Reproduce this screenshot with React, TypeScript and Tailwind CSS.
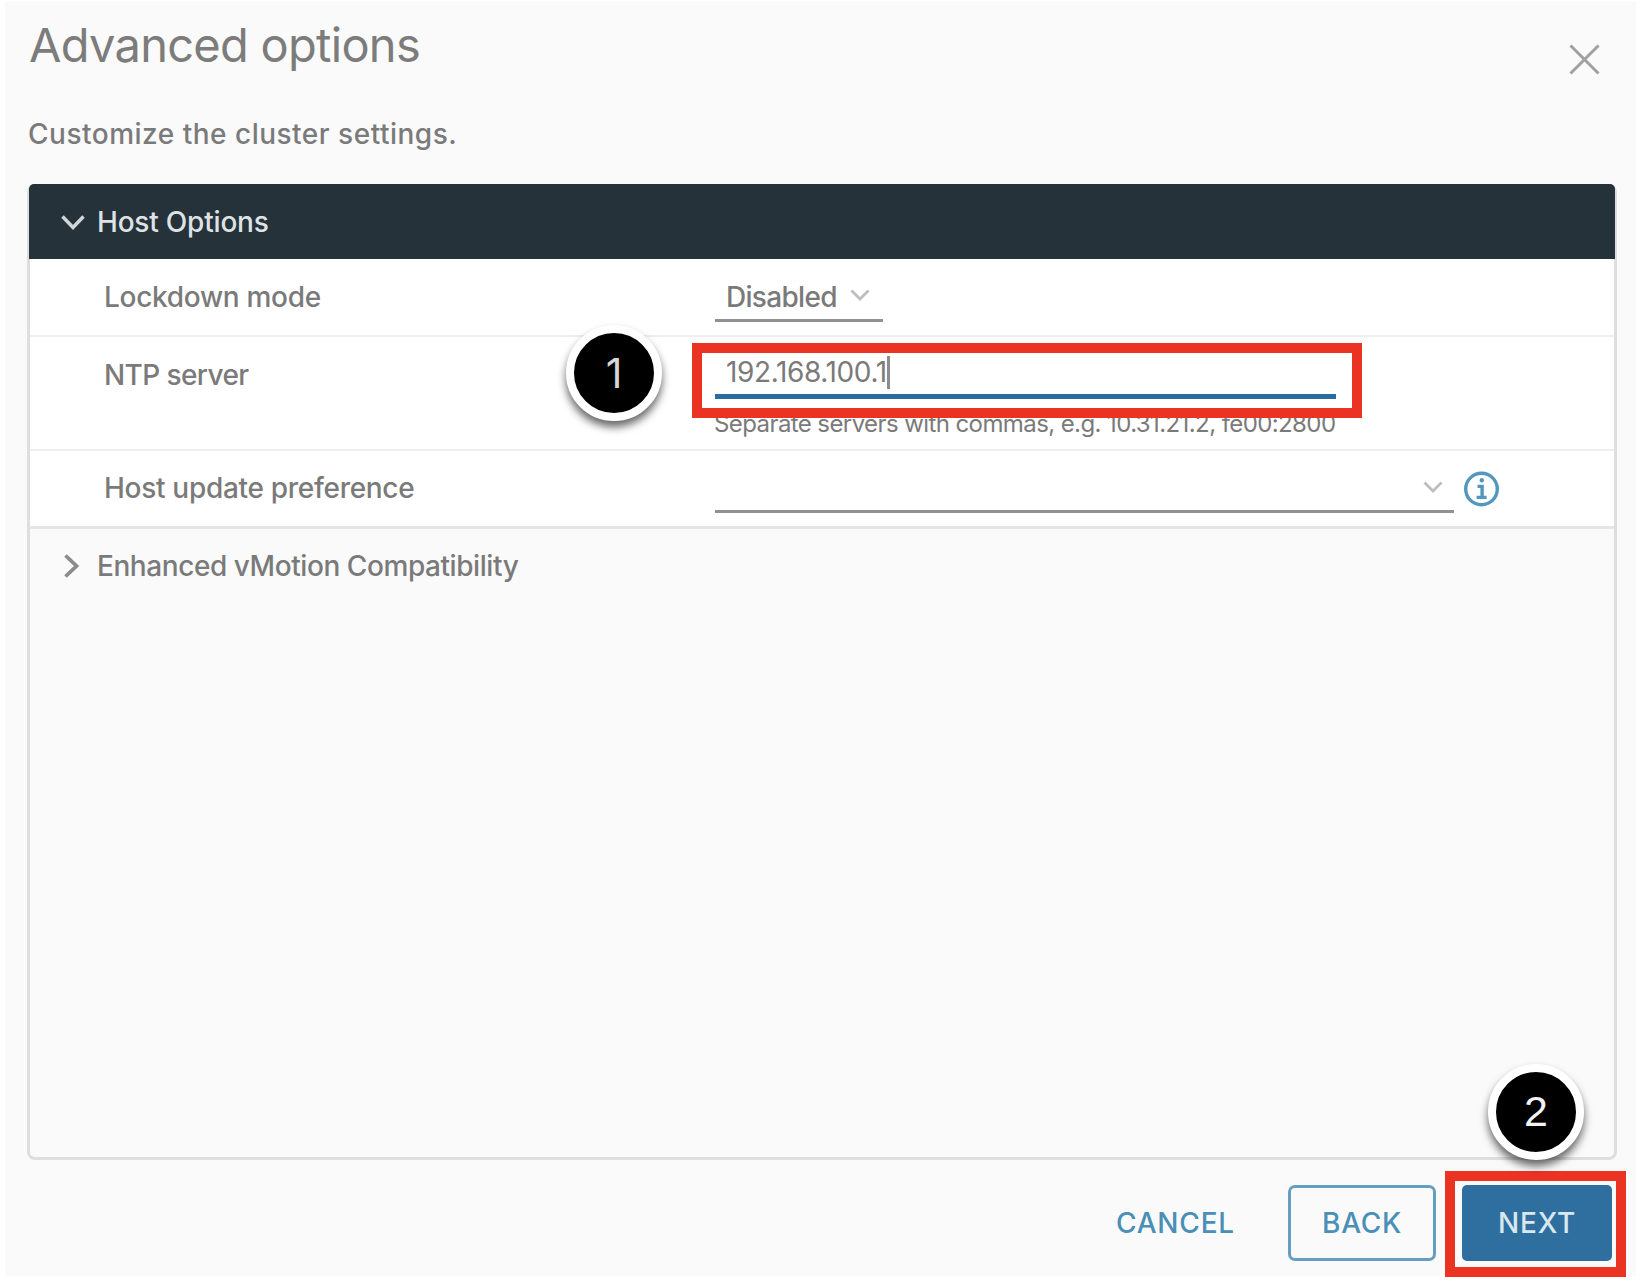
import type { ReactNode } from "react";

function Chevron({ className, points, box, stroke }: { className: string; points: string; box: string; stroke: number }) {
  return (
    <svg className={className} viewBox={box} fill="none" stroke="currentColor" strokeWidth={stroke}>
      <polyline points={points} />
    </svg>
  );
}

function SmallChevron() {
  return <Chevron className="h-3 w-5 text-[#bdbdbd]" box="0 0 20 12" points="1.5,1.5 10,10 18.5,1.5" stroke={2.8} />;
}

function InfoIcon() {
  return (
    <svg className="h-9 w-9 text-[#5297bd]" viewBox="0 0 36 36" fill="none" stroke="currentColor" strokeWidth={3.4}>
      <circle cx="17.5" cy="18" r="15.8" />
      <circle cx="17.8" cy="9.3" r="2.2" fill="currentColor" stroke="none" />
      <path d="M13.5 15.4h4.6v10.4M12.6 26.4h10" strokeWidth={3.4} />
    </svg>
  );
}

function Badge({ children, className }: { children: ReactNode; className: string }) {
  return (
    <div
      className={`absolute flex h-24 w-24 items-center justify-center rounded-full border-8 border-white bg-black shadow-[0_6px_9px_rgba(0,0,0,0.6)] ${className}`}
    >
      {children}
    </div>
  );
}

function Row({ label, className, labelClass, children }: { label: string; className: string; labelClass: string; children: ReactNode }) {
  return (
    <div className={`flex bg-white ${className}`}>
      <div className={`w-[612px] shrink-0 pl-[74px] leading-9 ${labelClass}`}>{label}</div>
      {children}
    </div>
  );
}

export default function App() {
  return (
    <div className="h-[1282px] w-[1642px] overflow-hidden bg-white pt-px pl-[5px] font-['Inter',sans-serif] text-[28px] font-medium text-[#7a7a7a]">
      <div className="relative flex h-[1275px] w-[1631px] flex-col bg-[#fafafa]">
        <header className="flex h-[109px] items-start justify-between pr-[36px] pl-[24px]">
          <h1 className="pt-[14px] text-[47px] leading-[60px] font-normal tracking-[-0.72px] text-[#7c7c7c]">Advanced options</h1>
          <button type="button" aria-label="Close" className="mt-[43px]">
            <svg className="h-[31px] w-[31px] text-[#a0a0a0]" viewBox="0 0 31 31" stroke="currentColor" strokeWidth={3}>
              <path d="M1.5 1.5l28 28M29.5 1.5l-28 28" />
            </svg>
          </button>
        </header>
        <p className="h-[74px] pt-[6px] pl-[23px] leading-9 tracking-[0.5px]">Customize the cluster settings.</p>

        <section className="ml-[22px] h-[976px] w-[1590px] rounded-lg border-x-[3px] border-b-[3px] border-[#dedede]">
          <div className="-mx-px flex h-[75px] items-center rounded-t-[5px] bg-[#25323a] pl-[32px] text-[#dfe2e4]">
            <Chevron className="h-4 w-6 text-[#d2d5d7]" box="0 0 24 16" points="1.5,2.5 12,13.5 22.5,2.5" stroke={3.5} />
            <span className="pt-px pl-[12px] tracking-[-0.2px]">Host Options</span>
          </div>

          <Row label="Lockdown mode" labelClass="pt-[20px] tracking-[-0.3px]" className="h-[78px] border-b-2 border-[#eeeeee]">
            <div className="mt-[17px] ml-[73px] flex h-[46px] w-[168px] items-start border-b-[3px] border-[#919191] pl-[11px]">
              <span className="pt-[3px] leading-9 tracking-[-0.7px]">Disabled</span>
              <span className="ml-[13px] pt-[13px]">
                <SmallChevron />
              </span>
            </div>
          </Row>

          <Row label="NTP server" labelClass="pt-[20px] tracking-[-0.6px]" className="h-[114px] border-b-2 border-[#eeeeee]">
            <div className="ml-[73px] flex w-[621px] flex-col">
              <div className="flex h-[62px] items-start border-b-[5px] border-[#2b6c9f] pt-[17px] pl-[11px] font-normal">
                <span className="leading-9 tracking-[-0.38px]">192.168.100.1</span>
                <span className="mt-[2px] h-[33px] w-[3px] bg-[#8c8c8c]" />
              </div>
              <span className="mt-[7px] -ml-px text-[24px] leading-9 font-normal tracking-[-0.59px] whitespace-nowrap">
                Separate servers with commas, e.g. 10.31.21.2, fe00:2800
              </span>
            </div>
          </Row>

          <Row label="Host update preference" labelClass="pt-[19px] tracking-[-0.3px]" className="h-[78px] border-b-[3px] border-[#e5e5e5]">
            <div className="ml-[73px] flex h-[62px] w-[739px] items-start justify-end border-b-[3px] border-[#919191] pt-[30px] pr-[11px]">
              <SmallChevron />
            </div>
            <span className="mt-[20px] ml-[10px]">
              <InfoIcon />
            </span>
          </Row>

          <div className="flex h-[74px] items-center pl-[34px]">
            <Chevron className="h-6 w-4 text-[#8c8c8c]" box="0 0 16 24" points="1.5,1.5 12.5,12 1.5,22.5" stroke={3.8} />
            <span className="pl-[17px] tracking-[-0.43px]">Enhanced vMotion Compatibility</span>
          </div>
        </section>

        <footer className="flex justify-end pt-[25px] pr-[24px] leading-9 text-[#498fb8]">
          <button type="button" className="mr-[53px] tracking-[0.8px]">CANCEL</button>
          <button type="button" className="mr-[26px] h-[76px] w-[148px] rounded-[7px] border-[3px] border-[#659fbf] tracking-[0.7px]">BACK</button>
          <button type="button" className="h-[76px] w-[150px] rounded-[5px] bg-[#2f6f9f] tracking-[0.8px] text-[#d9e7ef]">NEXT</button>
        </footer>

        <div className="absolute top-[342px] left-[687px] h-[75px] w-[670px] border-[10px] border-[#eb3323]" />
        <div className="absolute top-[1170px] left-[1440px] h-[106px] w-[181px] border-[10px] border-[#eb3323]" />
        <Badge className="top-[324px] left-[561px]">
          <span className="text-[41px] leading-none font-normal text-[#d6d6d6]">1</span>
        </Badge>
        <Badge className="top-[1063px] left-[1483px]">
          <span className="pb-[2px] font-['Liberation_Sans',sans-serif] text-[43px] leading-none font-normal text-[#f2f2f2]">2</span>
        </Badge>
      </div>
    </div>
  );
}
